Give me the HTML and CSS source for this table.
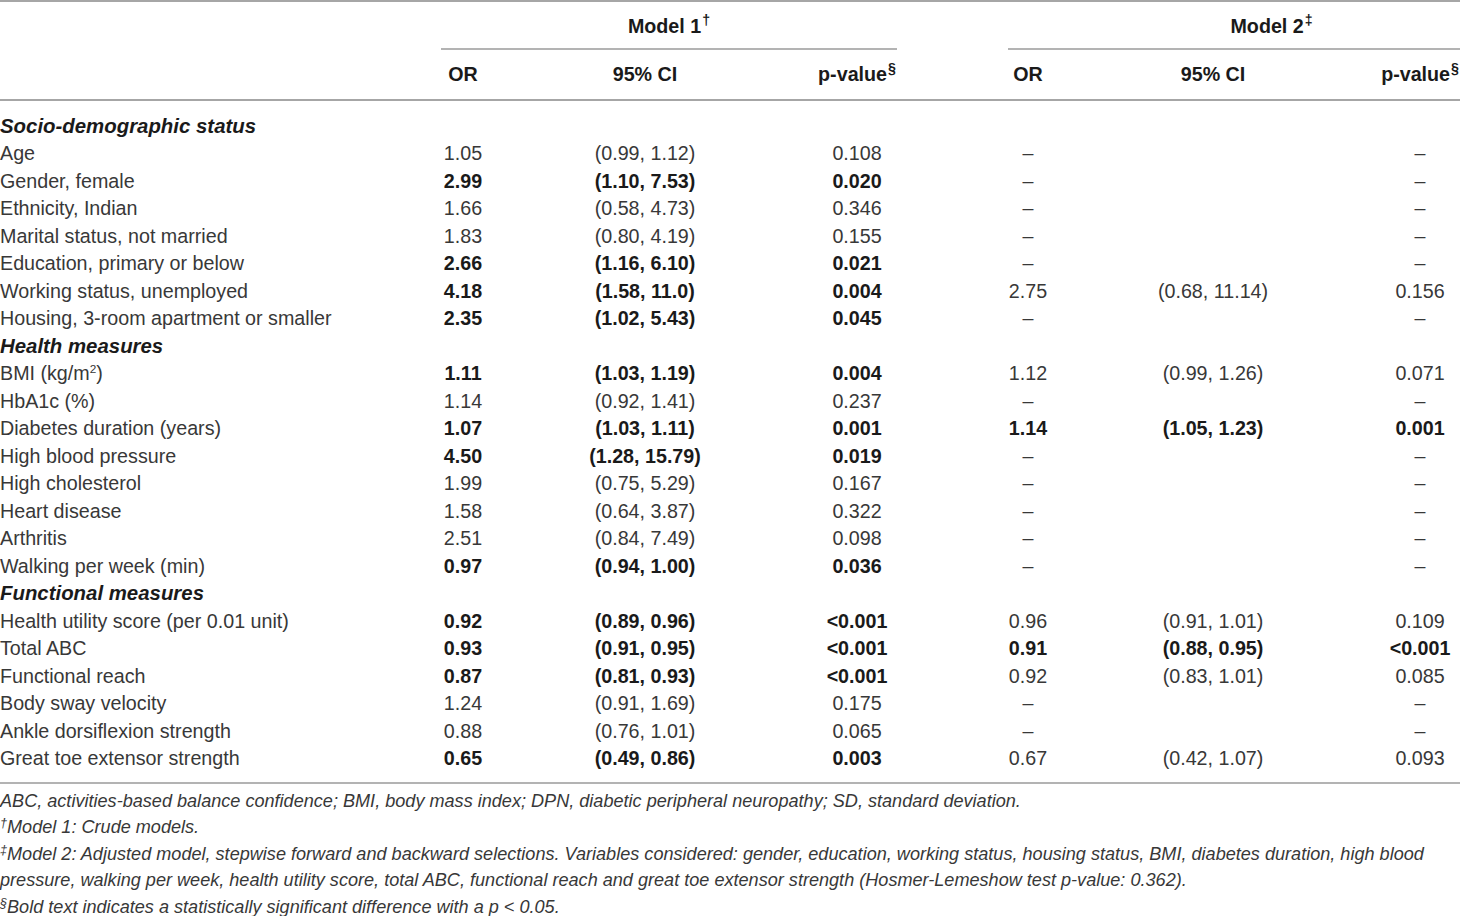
FILE: index.html
```html
<!DOCTYPE html>
<html lang="en">
<head>
  <meta charset="UTF-8" />
  <title>Logistic regression: odds ratios</title>
  <link rel="stylesheet" href="styles.css">
</head>
<body>
  <div class="table-wrap">
    <table class="results">
      <colgroup>
        <col class="c-label">
        <col class="c-or1">
        <col class="c-ci1">
        <col class="c-p1">
        <col class="c-or2">
        <col class="c-ci2">
        <col class="c-p2">
      </colgroup>
      <thead>
        <tr class="head-models">
          <th></th>
          <th colspan="3"><div class="model model-1">Model 1<sup>†</sup></div></th>
          <th colspan="3"><div class="model model-2">Model 2<sup>‡</sup></div></th>
        </tr>
        <tr class="head-cols">
          <th></th>
          <th>OR</th>
          <th>95% CI</th>
          <th>p-value<sup>§</sup></th>
          <th>OR</th>
          <th>95% CI</th>
          <th>p-value<sup>§</sup></th>
        </tr>
      </thead>
      <tbody>
        <tr class="section first"><td colspan="7">Socio-demographic status</td></tr>
        <tr><td>Age</td><td>1.05</td><td>(0.99, 1.12)</td><td>0.108</td><td>–</td><td></td><td>–</td></tr>
        <tr><td>Gender, female</td><td class="sig">2.99</td><td class="sig">(1.10, 7.53)</td><td class="sig">0.020</td><td>–</td><td></td><td>–</td></tr>
        <tr><td>Ethnicity, Indian</td><td>1.66</td><td>(0.58, 4.73)</td><td>0.346</td><td>–</td><td></td><td>–</td></tr>
        <tr><td>Marital status, not married</td><td>1.83</td><td>(0.80, 4.19)</td><td>0.155</td><td>–</td><td></td><td>–</td></tr>
        <tr><td>Education, primary or below</td><td class="sig">2.66</td><td class="sig">(1.16, 6.10)</td><td class="sig">0.021</td><td>–</td><td></td><td>–</td></tr>
        <tr><td>Working status, unemployed</td><td class="sig">4.18</td><td class="sig">(1.58, 11.0)</td><td class="sig">0.004</td><td>2.75</td><td>(0.68, 11.14)</td><td>0.156</td></tr>
        <tr><td>Housing, 3-room apartment or smaller</td><td class="sig">2.35</td><td class="sig">(1.02, 5.43)</td><td class="sig">0.045</td><td>–</td><td></td><td>–</td></tr>
        <tr class="section"><td colspan="7">Health measures</td></tr>
        <tr><td>BMI (kg/m<sup>2</sup>)</td><td class="sig">1.11</td><td class="sig">(1.03, 1.19)</td><td class="sig">0.004</td><td>1.12</td><td>(0.99, 1.26)</td><td>0.071</td></tr>
        <tr><td>HbA1c (%)</td><td>1.14</td><td>(0.92, 1.41)</td><td>0.237</td><td>–</td><td></td><td>–</td></tr>
        <tr><td>Diabetes duration (years)</td><td class="sig">1.07</td><td class="sig">(1.03, 1.11)</td><td class="sig">0.001</td><td class="sig">1.14</td><td class="sig">(1.05, 1.23)</td><td class="sig">0.001</td></tr>
        <tr><td>High blood pressure</td><td class="sig">4.50</td><td class="sig">(1.28, 15.79)</td><td class="sig">0.019</td><td>–</td><td></td><td>–</td></tr>
        <tr><td>High cholesterol</td><td>1.99</td><td>(0.75, 5.29)</td><td>0.167</td><td>–</td><td></td><td>–</td></tr>
        <tr><td>Heart disease</td><td>1.58</td><td>(0.64, 3.87)</td><td>0.322</td><td>–</td><td></td><td>–</td></tr>
        <tr><td>Arthritis</td><td>2.51</td><td>(0.84, 7.49)</td><td>0.098</td><td>–</td><td></td><td>–</td></tr>
        <tr><td>Walking per week (min)</td><td class="sig">0.97</td><td class="sig">(0.94, 1.00)</td><td class="sig">0.036</td><td>–</td><td></td><td>–</td></tr>
        <tr class="section"><td colspan="7">Functional measures</td></tr>
        <tr><td>Health utility score (per 0.01 unit)</td><td class="sig">0.92</td><td class="sig">(0.89, 0.96)</td><td class="sig">&lt;0.001</td><td>0.96</td><td>(0.91, 1.01)</td><td>0.109</td></tr>
        <tr><td>Total ABC</td><td class="sig">0.93</td><td class="sig">(0.91, 0.95)</td><td class="sig">&lt;0.001</td><td class="sig">0.91</td><td class="sig">(0.88, 0.95)</td><td class="sig">&lt;0.001</td></tr>
        <tr><td>Functional reach</td><td class="sig">0.87</td><td class="sig">(0.81, 0.93)</td><td class="sig">&lt;0.001</td><td>0.92</td><td>(0.83, 1.01)</td><td>0.085</td></tr>
        <tr><td>Body sway velocity</td><td>1.24</td><td>(0.91, 1.69)</td><td>0.175</td><td>–</td><td></td><td>–</td></tr>
        <tr><td>Ankle dorsiflexion strength</td><td>0.88</td><td>(0.76, 1.01)</td><td>0.065</td><td>–</td><td></td><td>–</td></tr>
        <tr class="last"><td>Great toe extensor strength</td><td class="sig">0.65</td><td class="sig">(0.49, 0.86)</td><td class="sig">0.003</td><td>0.67</td><td>(0.42, 1.07)</td><td>0.093</td></tr>
      </tbody>
    </table>
  </div>
  <div class="notes">
    <p>ABC, activities-based balance confidence; BMI, body mass index; DPN, diabetic peripheral neuropathy; SD, standard deviation.</p>
    <p><sup>†</sup>Model 1: Crude models.</p>
    <p><sup>‡</sup>Model 2: Adjusted model, stepwise forward and backward selections. Variables considered: gender, education, working status, housing status, BMI, diabetes duration, high blood pressure, walking per week, health utility score, total ABC, functional reach and great toe extensor strength (Hosmer-Lemeshow test p-value: 0.362).</p>
    <p><sup>§</sup>Bold text indicates a statistically significant difference with a p &lt; 0.05.</p>
  </div>
</body>
</html>
```

FILE: styles.css
```css
* {
  box-sizing: border-box;
  margin: 0;
  padding: 0;
}

body {
  background: #fff;
  font-family: "Liberation Sans", Arial, sans-serif;
  color: #383838;
  width: 1460px;
  overflow: hidden;
}

.table-wrap {
  width: 1460px;
  overflow: hidden;
}

.results {
  width: 1535px;
  table-layout: fixed;
  border-collapse: collapse;
  border-top: 2px solid #a6a6a6;
  font-size: 19.7px;
}

.c-label { width: 415px; }
.c-or1 { width: 96px; }
.c-ci1 { width: 268px; }
.c-p1 { width: 156px; }
.c-or2 { width: 186px; }
.c-ci2 { width: 184px; }
.c-p2 { width: 230px; }

.results th {
  font-weight: bold;
  color: #1a1a1a;
  text-align: center;
  padding: 0;
}

.head-models th {
  height: 49px;
  vertical-align: bottom;
}

.model {
  border-bottom: 2px solid #b3b3b3;
  padding-bottom: 10px;
  line-height: 24px;
}

.model-1 {
  margin-left: 26px;
  margin-right: 38px;
}

.model-2 {
  margin-left: 73px;
}

.head-cols th {
  height: 50px;
  border-bottom: 2px solid #a6a6a6;
}

.results th sup {
  font-size: 0.72em;
  line-height: 0;
  vertical-align: 0.55em;
  margin-left: 1px;
}

.results td sup {
  font-size: 0.6em;
  line-height: 0;
  vertical-align: 0.6em;
}

.results td {
  padding: 0;
  line-height: 27.48px;
  text-align: center;
  white-space: nowrap;
}

.results td:first-child {
  text-align: left;
}

.results .section td {
  font-weight: bold;
  font-style: italic;
  font-size: 20.4px;
  color: #1a1a1a;
}

.results .first td {
  padding-top: 12px;
}

.results .last td {
  padding-bottom: 9px;
  border-bottom: 2px solid #b3b3b3;
}

.results td.sig {
  font-weight: bold;
  color: #1a1a1a;
}

.notes {
  padding-top: 4px;
  font-style: italic;
  font-size: 18.1px;
  line-height: 26.5px;
  color: #383838;
}

.notes sup {
  font-size: 0.7em;
  line-height: 0;
  vertical-align: 0.45em;
}
```
